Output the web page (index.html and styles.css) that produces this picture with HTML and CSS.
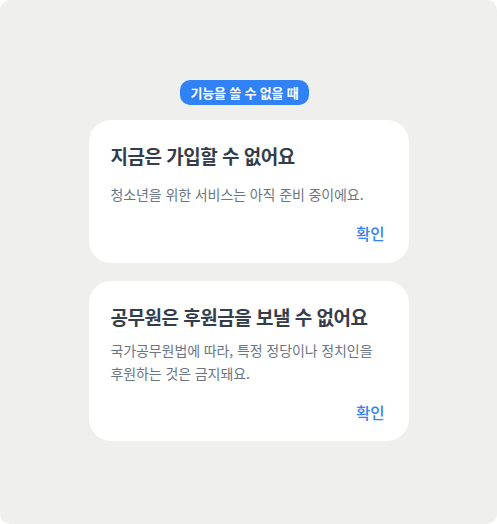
FILE: index.html
```html
<!DOCTYPE html>
<html lang="ko">
<head>
<meta charset="utf-8">
<title>기능을 쓸 수 없을 때</title>
<link rel="stylesheet" href="styles.css">
</head>
<body>
<main class="stage">
  <span class="badge">기능을 쓸 수 없을 때</span>

  <section class="dialog dialog--loose">
    <h2 class="dialog__title">지금은 가입할 수 없어요</h2>
    <p class="dialog__desc">청소년을 위한 서비스는 아직 준비 중이에요.</p>
    <div class="dialog__actions">
      <button class="dialog__btn" type="button">확인</button>
    </div>
  </section>

  <section class="dialog">
    <h2 class="dialog__title">공무원은 후원금을 보낼 수 없어요</h2>
    <p class="dialog__desc">국가공무원법에 따라, 특정 정당이나 정치인을<br>후원하는 것은 금지돼요.</p>
    <div class="dialog__actions">
      <button class="dialog__btn" type="button">확인</button>
    </div>
  </section>
</main>
</body>
</html>
```

FILE: styles.css
```css
html, body {
  margin: 0;
  padding: 0;
  background: #ffffff;
}

body {
  font-family: "Noto Sans CJK KR", "Noto Sans", sans-serif;
}

.stage {
  box-sizing: border-box;
  width: 497px;
  height: 524px;
  background: #efefed;
  border-radius: 10px;
  padding-top: 80px;
  display: flex;
  flex-direction: column;
  align-items: center;
}

.badge {
  height: 25px;
  line-height: 25px;
  padding: 0 11px;
  margin-right: 8px;
  border-radius: 10px;
  background: #3182f6;
  color: #ffffff;
  font-size: 13px;
  font-weight: 700;
  letter-spacing: -0.2px;
}

.dialog {
  box-sizing: border-box;
  width: 320px;
  margin-top: 15px;
  padding: 23px 22px 18px;
  background: #ffffff;
  border-radius: 22px;
}

.dialog + .dialog {
  margin-top: 18px;
}

.dialog__title {
  margin: 0;
  font-size: 19px;
  line-height: 26px;
  font-weight: 700;
  color: #333d4b;
  letter-spacing: -0.5px;
}

.dialog__desc {
  margin: 9px 0 0;
  font-size: 14px;
  line-height: 23px;
  color: #6b7684;
  letter-spacing: -0.1px;
}

.dialog--loose {
  padding-bottom: 19px;
}

.dialog--loose .dialog__desc {
  margin-top: 14px;
}

.dialog__actions {
  display: flex;
  justify-content: flex-end;
  margin-top: 16px;
}

.dialog__btn {
  border: 0;
  background: none;
  padding: 0 2px 0 0;
  font-family: inherit;
  font-size: 15.5px;
  line-height: 22px;
  font-weight: 500;
  color: #3182f6;
  cursor: pointer;
}
```
